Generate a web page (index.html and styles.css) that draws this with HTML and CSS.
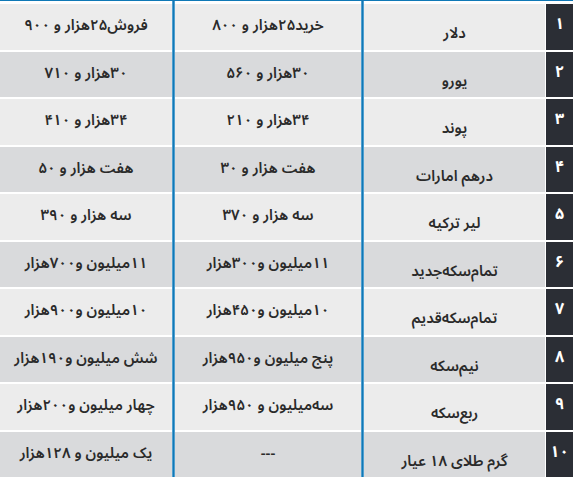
FILE: index.html
```html
<!DOCTYPE html>
<html lang="fa" dir="rtl">
<head>
<meta charset="utf-8">
<title>نرخ ارز و سکه</title>
<link rel="stylesheet" href="styles.css">
</head>
<body>
<div class="table">
  <div class="row odd first">
    <div class="num">۱</div><div class="sep"></div><div class="name">دلار</div><div class="vline"></div><div class="val">خرید۲۵هزار و ۸۰۰</div><div class="vline"></div><div class="val">فروش۲۵هزار و ۹۰۰</div>
  </div>
  <div class="row even">
    <div class="num">۲</div><div class="sep"></div><div class="name">یورو</div><div class="vline"></div><div class="val">۳۰هزار و ۵۶۰</div><div class="vline"></div><div class="val">۳۰هزار و ۷۱۰</div>
  </div>
  <div class="row odd">
    <div class="num">۳</div><div class="sep"></div><div class="name">پوند</div><div class="vline"></div><div class="val">۳۴هزار و ۲۱۰</div><div class="vline"></div><div class="val">۳۴هزار و ۴۱۰</div>
  </div>
  <div class="row even">
    <div class="num">۴</div><div class="sep"></div><div class="name">درهم امارات</div><div class="vline"></div><div class="val">هفت هزار و ۳۰</div><div class="vline"></div><div class="val">هفت هزار و ۵۰</div>
  </div>
  <div class="row odd">
    <div class="num">۵</div><div class="sep"></div><div class="name">لیر ترکیه</div><div class="vline"></div><div class="val">سه هزار و ۳۷۰</div><div class="vline"></div><div class="val">سه هزار و ۳۹۰</div>
  </div>
  <div class="row even">
    <div class="num">۶</div><div class="sep"></div><div class="name">تمام‌سکه‌جدید</div><div class="vline"></div><div class="val">۱۱میلیون و۳۰۰هزار</div><div class="vline"></div><div class="val">۱۱میلیون و۷۰۰هزار</div>
  </div>
  <div class="row odd">
    <div class="num">۷</div><div class="sep"></div><div class="name">تمام‌سکه‌قدیم</div><div class="vline"></div><div class="val">۱۰میلیون و۴۵۰هزار</div><div class="vline"></div><div class="val">۱۰میلیون و۹۰۰هزار</div>
  </div>
  <div class="row even">
    <div class="num">۸</div><div class="sep"></div><div class="name">نیم‌سکه</div><div class="vline"></div><div class="val">پنج میلیون و۹۵۰هزار</div><div class="vline"></div><div class="val">شش میلیون و۱۹۰هزار</div>
  </div>
  <div class="row odd">
    <div class="num">۹</div><div class="sep"></div><div class="name">ربع‌سکه</div><div class="vline"></div><div class="val">سه‌میلیون و ۹۵۰هزار</div><div class="vline"></div><div class="val">چهار میلیون و۲۰۰هزار</div>
  </div>
  <div class="row even">
    <div class="num">۱۰</div><div class="sep"></div><div class="name">گرم طلای ۱۸ عیار</div><div class="vline"></div><div class="val">---</div><div class="vline"></div><div class="val">یک میلیون و ۱۲۸هزار</div>
  </div>
</div>
</body>
</html>
```
FILE: styles.css
```css
html, body {
  margin: 0;
  padding: 0;
  background: #ffffff;
}
body {
  width: 576px;
  height: 477px;
  overflow: hidden;
  font-family: "Noto Sans Arabic", "Noto Naskh Arabic", "DejaVu Sans", sans-serif;
  color: #2a2a2a;
}
.table {
  direction: rtl;
  margin-right: 3px;
  border-top: 1px solid #0f78b6;
}
.row {
  display: grid;
  grid-template-columns: 27px 1px 181px 3px 186px 3px 172px;
  height: 47.5px;
}
.row.first {
  height: 50.5px;
}
.row > div {
  box-sizing: border-box;
  border-bottom: 2px solid #ffffff;
  text-align: center;
  white-space: nowrap;
}
.row.first > div {
  border-top: 3px solid #ffffff;
}
.row > .vline {
  background: #1178b5;
  border: none;
  box-shadow: inset 1px 0 0 #4f9fd0, inset -1px 0 0 #4f9fd0;
}
.row.first > .vline {
  border: none;
}
.sep {
  background: #ffffff;
}
.odd .name, .odd .val {
  background: #ececec;
}
.even .name, .even .val {
  background: #d9dadc;
}
.num {
  background: #2b2e35;
  color: #ffffff;
  font-weight: bold;
  font-size: 16px;
  line-height: 20px;
  padding-top: 10px;
}
.name {
  font-size: 15px;
  font-weight: 600;
  line-height: 20px;
  padding-top: 19px;
}
.val {
  font-size: 15px;
  font-weight: 600;
  line-height: 20px;
  padding-top: 11px;
}
```
